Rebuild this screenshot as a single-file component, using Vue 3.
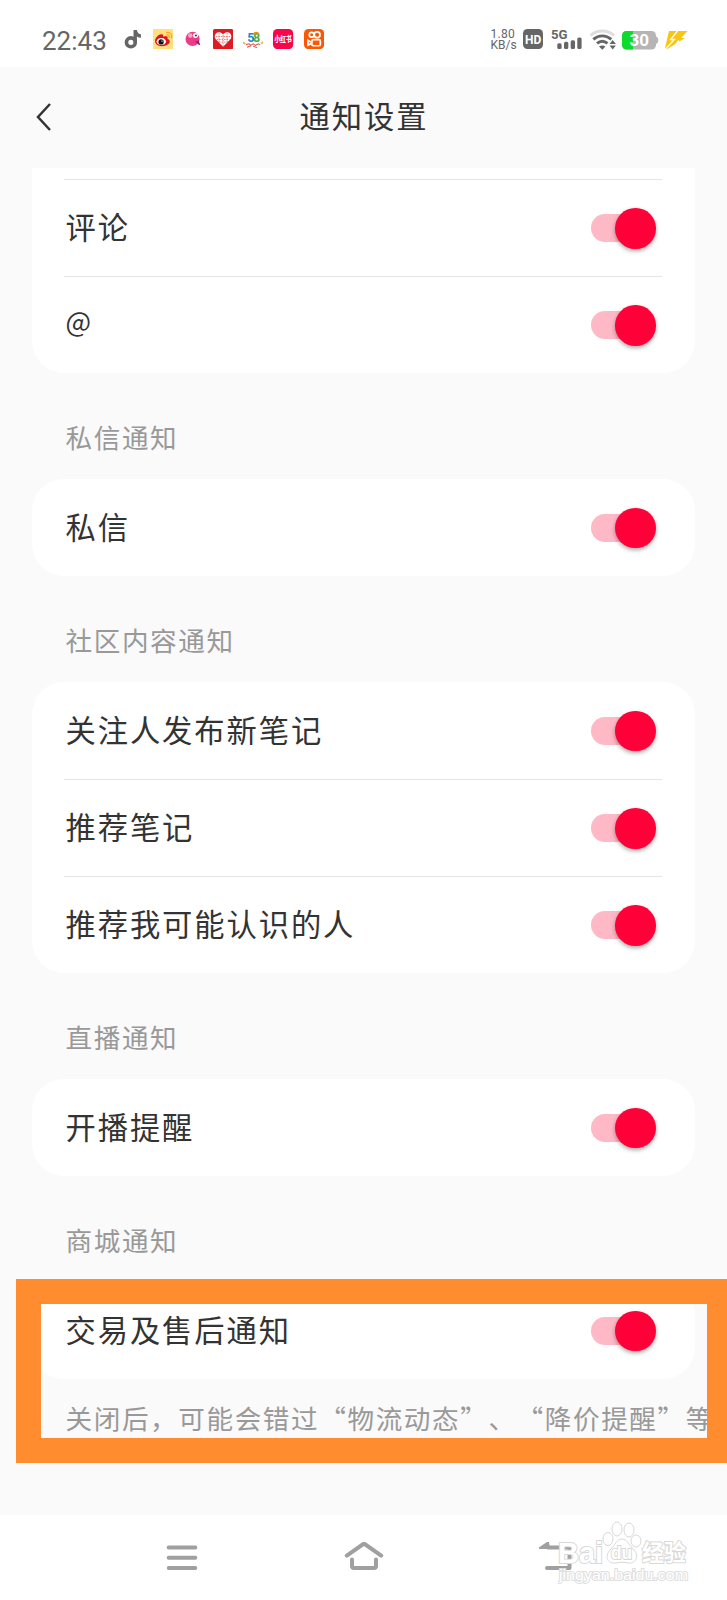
<template>
  <div class="page">
    <header class="status-bar">
      <div class="time">22:43</div>
      <div class="app-icons">
        <svg viewBox="0 0 20 20">
          <circle cx="7.800" cy="13.200" r="4.400" fill="none" stroke="#666" stroke-width="3.600" />
          <path d="M10.400 1h3.400c.3 2.600 1.800 4 4 4.300v3.400c-1.600 0-2.900-.4-4-1.200v6h-3.400z" fill="#666" />
        </svg>
        <svg viewBox="0 0 20 20">
          <rect width="20" height="20" rx="1" fill="#ffdf80" />
          <path d="M2 12c0-4 5-8 7.500-6.500 1 .6.500 2 .5 2s4-1.200 4.500.5c.3 1-.3 1.600-.3 1.600 5 1.900 2 7.400-5.700 7.400C5 17 2 15 2 12z" fill="#e0121b" />
          <ellipse cx="8.200" cy="12.400" rx="4.700" ry="3.500" fill="#fff" />
          <circle cx="8" cy="12.800" r="2.600" fill="#111" />
          <circle cx="8.900" cy="12" r=".7" fill="#fff" />
          <path d="M13.500 6c2-.4 3 1 2.500 2.800M13 3.500c4-.8 6.300 2 5.200 5.800" fill="none" stroke="#f5a623" stroke-width="1.200" />
        </svg>
        <svg viewBox="0 0 20 20">
          <circle cx="9.500" cy="9.800" r="7" fill="#ec3c86" />
          <circle cx="7.200" cy="6.500" r="2.200" fill="#f9a9c6" />
          <circle cx="12.300" cy="6.500" r="2.500" fill="#fff" />
          <circle cx="12.800" cy="6.500" r="1" fill="#702040" />
          <path d="M10 11.500c2 1.200 4 1 5.500-.5l1 4-3-1.500z" fill="#9c2a7a" />
          <path d="M14 12.500l2.500 3" stroke="#5a2b8c" stroke-width="1.500" />
        </svg>
        <svg viewBox="0 0 20 20">
          <rect width="20" height="20" rx="1.500" fill="#dc1c22" />
          <path d="M10 17.500L2.500 10C.5 6.500 3 3 6 3.200c2 0 3.300 1 4 2.300.7-1.300 2-2.300 4-2.300 3-.2 5.500 3.300 3.500 6.800z" fill="#fff" />
          <path d="M3 7.500h14M3.500 10.500h13M6 13h8M6 4v9M10 6v11M14 4v9" stroke="#e85458" stroke-width=".8" stroke-dasharray="1.500 1" />
        </svg>
        <svg viewBox="0 0 20 20">
          <text x="4.200" y="12.500" font-size="12.500" font-weight="700" fill="#1689c9">5</text>
          <text x="10" y="12.500" font-size="12.500" font-weight="700" fill="#45ad45">8</text>
          <path d="M10.800 5.800c0-3 4.500-3 4.600-.4" fill="none" stroke="#f28b1b" stroke-width="1.500" />
          <path d="M0 13l2 2M18 14.500l2-1.500" stroke="#f3b653" stroke-width="2" />
          <path d="M3 15.500l3-.8 1.500 1.500 2.500-1.500 2.500 1.500 3-1.500 1.500 1M4 18l4-1.500M10 17l4 1.500" fill="none" stroke="#e2574c" stroke-width="1.100" />
        </svg>
        <svg viewBox="0 0 20 20">
          <rect width="20" height="20" rx="4.500" fill="#fa0547" />
          <text x="1.500" y="12.900" font-size="7.400" font-weight="900" textLength="17" lengthAdjust="spacingAndGlyphs" fill="#fff">小红书</text>
        </svg>
        <svg viewBox="0 0 20 20">
          <rect width="20" height="20" rx="4.500" fill="#fb5806" />
          <g fill="none" stroke="#fff" stroke-width="1.700">
            <circle cx="7.600" cy="5.700" r="2.400" />
            <circle cx="13" cy="5.700" r="2.900" />
            <rect x="7.800" y="10.600" width="8.400" height="6" rx="1.500" />
            <path d="M7.800 13.300L4 11.300v4.700l3.800-1.800" />
          </g>
        </svg>
      </div>

      <div class="system-icons">
        <div class="speed"><span>1.80</span><span>KB/s</span></div>
        <svg class="hd" viewBox="0 0 20 20">
          <rect width="20" height="20" rx="4.500" fill="#666" />
          <text x="2" y="15" font-size="13.500" font-weight="700" textLength="16.300" lengthAdjust="spacingAndGlyphs" fill="#fff">HD</text>
        </svg>
        <svg class="signal" viewBox="0 0 32 22">
          <text x="0" y="11.300" font-size="13.300" font-weight="700" textLength="16.500" lengthAdjust="spacingAndGlyphs" fill="#666">5G</text>
          <g fill="#666">
            <rect x="6.300" y="15.200" width="4.300" height="5.800" rx="1.500" />
            <rect x="13" y="13.800" width="4.300" height="7.200" rx="1.500" />
            <rect x="19.700" y="12.300" width="4.300" height="8.700" rx="1.500" />
            <rect x="26.300" y="9.500" width="4.300" height="11.500" rx="1.500" />
          </g>
        </svg>
        <svg class="wifi" viewBox="0 0 28 22">
          <g fill="none" stroke-width="2.900">
            <path d="M1.500 6.500c6.500-6 17-6 23.500 0" stroke="#ddd" />
            <path d="M4.300 10.300c5.300-4.600 12.700-4.600 18 0" stroke="#666" />
            <path d="M8 14.300c3.200-2.600 7.300-2.600 10.500 0" stroke="#666" />
          </g>
          <path d="M10 17.500c2-1.500 4.500-1.500 6.500 0l-3.200 3.200z" fill="#666" />
          <path d="M20.500 15l3.200-4 3.200 4zM20.500 16.500l3.200 4 3.200-4z" fill="#666" />
        </svg>
        <svg class="battery" viewBox="0 0 37 19">
          <rect width="34" height="18.500" rx="4.500" fill="#b5b5b5" />
          <path d="M4.500 0H11v18.500H4.500A4.500 4.500 0 0 1 0 14V4.500A4.500 4.500 0 0 1 4.500 0z" fill="#0cdb2b" />
          <path d="M34 5.500c3 .5 3 7 0 7.500z" fill="#b5b5b5" />
          <text x="7.500" y="15.400" font-size="17" font-weight="700" textLength="19.500" lengthAdjust="spacingAndGlyphs" fill="#fff">30</text>
        </svg>
        <svg class="bolt" viewBox="0 0 23 19">
          <path d="M4 0h18.500L16 7h4L1.500 18.500 0 17z" fill="#fac50e" />
          <path d="M12.500 0L5.500 8.500h4L.5 18M14 9.500l-3 3.500" fill="none" stroke="#fff" stroke-width="1.300" />
        </svg>
      </div>
    </header>

    <div class="title-bar">
      <svg class="back" viewBox="0 0 16 30">
        <path d="M14 2L2 15l12 13" fill="none" stroke="#333" stroke-width="2.500" />
      </svg>
      <h1>通知设置</h1>
    </div>

    <main class="content">
      <section v-for="(group, index) in groups" :key="index">
        <h2 v-if="group.title">{{ group.title }}</h2>
        <div class="card" :class="{ continued: !group.title }">
          <div v-for="item in group.items" :key="item.label" class="row" @click="item.on = !item.on">
            <span class="label" :class="{ symbol: item.label === '@' }">{{ item.label }}</span>
            <i class="switch" :class="{ off: !item.on }"></i>
          </div>
        </div>
      </section>
      <p class="note">关闭后，可能会错过“物流动态”、“降价提醒”等</p>
    </main>

    <nav class="nav-bar">
      <svg viewBox="0 0 40 32">
        <path d="M6.700 5.500h26.600M6.700 15.700h26.600M6.700 25.900h26.600" />
      </svg>
      <svg class="home" viewBox="0 0 40 32">
        <path d="M2.800 13.700L20 1.500l17.200 12.200M8 17.500V24q0 2 2 2h20q2 0 2-2V17.500" />
      </svg>
      <svg class="return" viewBox="0 0 40 32">
        <path d="M12 5.500H33.500v20.400H11" />
        <path d="M3.800 6L12 0.500l1 5.500z" class="tip" />
      </svg>
    </nav>

    <div class="highlight"></div>

    <svg class="watermark" viewBox="0 0 134 66">
      <g class="outline">
        <ellipse cx="50" cy="18" rx="5" ry="6.500" />
        <ellipse cx="59" cy="8" rx="5" ry="7" />
        <ellipse cx="71" cy="9" rx="5" ry="7" />
        <ellipse cx="78" cy="20" rx="5" ry="6" />
        <path d="M64 18c5 0 7 6 12 11 6 7 1 14-6 13-4-1-8-1-12 0-8 1-12-6-6-13 5-5 7-11 12-11z" />
        <text x="0" y="42" font-size="30" font-weight="700" textLength="45" lengthAdjust="spacingAndGlyphs">Bai</text>
        <text x="53" y="38" font-size="19" font-weight="700" textLength="21" lengthAdjust="spacingAndGlyphs">du</text>
        <text x="84" y="40" font-size="23" font-weight="700" textLength="44" lengthAdjust="spacingAndGlyphs">经验</text>
        <text x="1" y="58.500" font-size="15" class="site" textLength="129" lengthAdjust="spacingAndGlyphs">jingyan.baidu.com</text>
      </g>
    </svg>
  </div>
</template>

<script setup>
import { ref } from 'vue';

const groups = ref([
  {
    title: '',
    items: [
      { label: '评论', on: true },
      { label: '@', on: true }
    ]
  },
  {
    title: '私信通知',
    items: [{ label: '私信', on: true }]
  },
  {
    title: '社区内容通知',
    items: [
      { label: '关注人发布新笔记', on: true },
      { label: '推荐笔记', on: true },
      { label: '推荐我可能认识的人', on: true }
    ]
  },
  {
    title: '直播通知',
    items: [{ label: '开播提醒', on: true }]
  },
  {
    title: '商城通知',
    items: [{ label: '交易及售后通知', on: true }]
  }
]);
</script>

<style>
body {
  margin: 0;
}
</style>

<style scoped>
.page {
  position: relative;
  display: flex;
  flex-direction: column;
  width: 727px;
  height: 1600px;
  overflow: hidden;
  background: #fafafa;
  color: #333;
  font-family: "Noto Sans CJK SC", sans-serif;
  text-spacing-trim: space-all;
}

.status-bar {
  display: flex;
  flex: none;
  box-sizing: border-box;
  height: 67px;
  padding: 29px 0 0 42px;
  background: #fff;
  color: #666;
  font-family: Roboto, "Noto Sans CJK SC", sans-serif;
}

.time {
  width: 80.500px;
  font-size: 26px;
  line-height: 24px;
}

.app-icons {
  display: flex;
  gap: 10px;
  width: 368px;
}

.app-icons svg {
  width: 20.200px;
  height: 20.200px;
}

.system-icons {
  display: flex;
}

.speed {
  display: flex;
  flex-direction: column;
  width: 32.500px;
  font-size: 12px;
  line-height: 11px;
}

.speed span:first-child {
  letter-spacing: 0.300px;
}

.hd {
  width: 20px;
  height: 20px;
}

.signal {
  width: 32px;
  height: 22px;
  margin: -1px 0 0 8px;
}

.wifi {
  width: 28px;
  height: 22px;
  margin-left: 6px;
}

.battery {
  width: 37px;
  height: 19px;
  margin: 2px 0 0 5px;
}

.bolt {
  width: 23px;
  height: 19px;
  margin: 2px 0 0 6px;
}

.title-bar {
  display: grid;
  flex: none;
  grid-template-columns: 100px 1fr 100px;
  align-items: center;
  box-sizing: border-box;
  height: 101px;
  padding-bottom: 2px;
}

.back {
  width: 16px;
  height: 30px;
  margin-left: 36px;
}

h1 {
  margin: 0;
  padding: 0 0 4px 1px;
  font-size: 30.300px;
  font-weight: 400;
  line-height: 44px;
  letter-spacing: 1.900px;
  text-align: center;
}

.content {
  flex: 1;
  min-height: 0;
}

h2 {
  box-sizing: border-box;
  height: 106px;
  margin: 0;
  padding: 43.500px 0 0 65.500px;
  color: #999;
  font-size: 26.600px;
  font-weight: 400;
  line-height: 40px;
  letter-spacing: 1.600px;
}

.card {
  margin: 0 32px;
  padding: 0 33px 0 32px;
  border-radius: 32px;
  background: #fff;
}

.card.continued {
  padding-top: 11px;
  border-radius: 0 0 32px 32px;
}

.row {
  display: flex;
  align-items: center;
  justify-content: space-between;
  box-sizing: border-box;
  height: 97px;
  padding: 0 6px 0 1.500px;
  font-size: 30.300px;
  letter-spacing: 1.900px;
  cursor: pointer;
}

.row + .row,
.continued .row {
  border-top: 1.500px solid #e5e5e5;
}

.label {
  padding-bottom: 4px;
}

.label.symbol {
  padding-bottom: 10px;
  font-size: 27px;
}

.switch {
  position: relative;
  width: 58px;
  height: 28px;
  margin-right: 7px;
  border-radius: 14px;
  background: #ffb8c5;
}

.switch::after {
  content: "";
  position: absolute;
  top: -6px;
  left: 24px;
  width: 40.500px;
  height: 40.500px;
  border-radius: 50%;
  background: #ff0038;
  box-shadow: 0 2px 4px rgba(0, 0, 0, 0.35);
}

.switch.off {
  background: #ddd;
}

.switch.off::after {
  left: -6px;
  background: #fff;
}

.note {
  margin: 19px 0 0 65.500px;
  color: #999;
  font-size: 26.600px;
  line-height: 40px;
  letter-spacing: 1.600px;
  white-space: nowrap;
}

.nav-bar {
  display: flex;
  flex: none;
  box-sizing: border-box;
  height: 85px;
  padding: 27px 0 0 162px;
  background: #fff;
}

.nav-bar svg {
  width: 40px;
  height: 32px;
  fill: none;
  stroke: #a0a0a0;
  stroke-width: 4;
  stroke-linecap: round;
  stroke-linejoin: round;
}

.nav-bar .home {
  margin-left: 141.500px;
}

.nav-bar .return {
  margin-left: 152.500px;
}

.nav-bar .tip {
  fill: #a0a0a0;
  stroke-width: 2;
}

/* 标注框 */
.highlight {
  position: absolute;
  top: 1278.500px;
  left: 16px;
  width: 666px;
  height: 134px;
  border: 25px solid #ff8c2e;
  pointer-events: none;
}

.watermark {
  position: absolute;
  top: 1521px;
  left: 558px;
  width: 134px;
  height: 66px;
}

.outline {
  fill: #fff;
  stroke: #d8d8d8;
  stroke-width: 1;
  font-family: "Liberation Sans", "Noto Sans CJK SC", sans-serif;
}

.outline text {
  stroke-width: 2;
  paint-order: stroke;
}

.outline .site {
  stroke: #e0e0e0;
}
</style>
